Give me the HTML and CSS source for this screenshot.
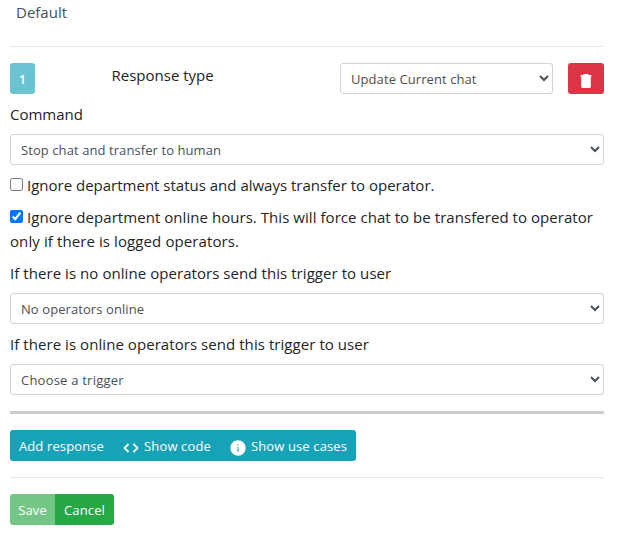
FILE: index.html
```html
<!DOCTYPE html>
<html lang="en">
<head>
<meta charset="utf-8">
<title>Trigger</title>
<link rel="stylesheet" href="styles.css">
</head>
<body>
<main class="page">
  <div class="tab">Default</div>
  <hr class="rule">
  <div class="response">
    <button class="btn index">1</button>
    <span class="type-label">Response type</span>
    <select class="control type-select"><option>Update Current chat</option></select>
    <button class="btn danger" aria-label="Delete">
      <svg width="12" height="16" viewBox="0 0 12 16"><path d="M.5 3.500V2H3.500V1h5v1h3v1.500h-.7v10q0 1.500-1.500 1.500H2.700q-1.500 0-1.500-1.500v-10z" fill="#fff"/></svg>
    </button>
  </div>
  <label class="label">Command</label>
  <select class="control"><option>Stop chat and transfer to human</option></select>
  <label class="check"><input type="checkbox">Ignore department status and always transfer to operator.</label>
  <label class="check hours"><input type="checkbox" checked>Ignore department online hours. This will force chat to be transfered to operator<br><span class="hours-end">only if there is logged operators.</span></label>
  <label class="label wide">If there is no online operators send this trigger to user</label>
  <select class="control"><option>No operators online</option></select>
  <label class="label wide">If there is online operators send this trigger to user</label>
  <select class="control trigger"><option>Choose a trigger</option></select>
  <hr class="thick">
  <div class="group info">
    <button class="btn add">Add response</button>
    <button class="btn code"><svg width="16" height="10" viewBox="0 0 16 10"><path d="M5.500 1L1.500 5l4 4M10.500 1l4 4-4 4" fill="none" stroke="#fff" stroke-width="1.800"/></svg>Show code</button>
    <button class="btn cases"><svg width="16" height="16" viewBox="0 0 16 16"><circle cx="8" cy="8" r="7.700" fill="#fff"/><path d="M7.500 4h1v1.500h-1zM7.500 7h1v5h-1z" fill="#17a2b8"/></svg>Show use cases</button>
  </div>
  <hr class="rule lower">
  <div class="group">
    <button class="btn save">Save</button>
    <button class="btn cancel">Cancel</button>
  </div>
</main>
</body>
</html>
```
FILE: styles.css
```css
* { box-sizing: border-box; }
body { margin: 0; background: #fff; color: #212529; font: 15px/24px "Open Sans", "Noto Sans", sans-serif; }
.page { width: 604px; padding-left: 10px; }
.tab { padding: 0 6px; height: 25px; color: #495057; }
hr { margin: 0; border: 0; }
.rule { margin-top: 21px; height: 1px; background: #e5e5e5; }
.response { display: flex; margin-top: 16px; height: 31px; }
.btn { height: 31px; border: 0; padding: 2px 0 0; border-radius: 3px; color: #fff; font: 13px/21px "Open Sans", "Noto Sans", sans-serif; letter-spacing: 0.13px; display: flex; align-items: center; justify-content: center; white-space: nowrap; }
.index { width: 25px; background: #6ac3d0; font-weight: 600; }
.type-label { margin-left: 76px; padding-left: 0.5px; width: 229px; }
.control { display: block; width: 100%; height: 31px; padding: 4px 6px; border: 1px solid #ced4da; border-radius: 3px; background: #fff; color: #495057; font: 13px/21px "Open Sans", "Noto Sans", sans-serif; letter-spacing: 0.08px; }
.type-select { width: 213px; }
.trigger { letter-spacing: 0.22px; }
.danger { width: 36px; margin-left: 15px; background: #dc3545; }
.danger svg { margin-top: 2px; }
.label { display: block; height: 24px; margin: 8px 0; white-space: nowrap; }
.wide { letter-spacing: 0.06px; }
.check { display: block; margin-top: 8px; white-space: nowrap; }
.check input { width: 13px; height: 13px; margin: 0 4px 0 0; }
.hours { letter-spacing: 0.05px; }
.hours-end { letter-spacing: 0.1px; }
.thick { margin-top: 16px; height: 3px; background: #ccc; }
.group { display: flex; margin-top: 16px; width: max-content; border-radius: 3px; overflow: hidden; }
.group .btn { border-radius: 0; }
.info .btn { background: #17a2b8; }
.add { width: 103px; }
.code { width: 108px; }
.cases { width: 135px; }
.code svg { margin: 2px 5px 0 0; }
.cases svg { margin: 2px 5px 0 0; }
.lower { margin-top: 16px; }
.group .save { width: 45px; background: #74c686; }
.group .cancel { width: 59px; background: #28a745; }
```
